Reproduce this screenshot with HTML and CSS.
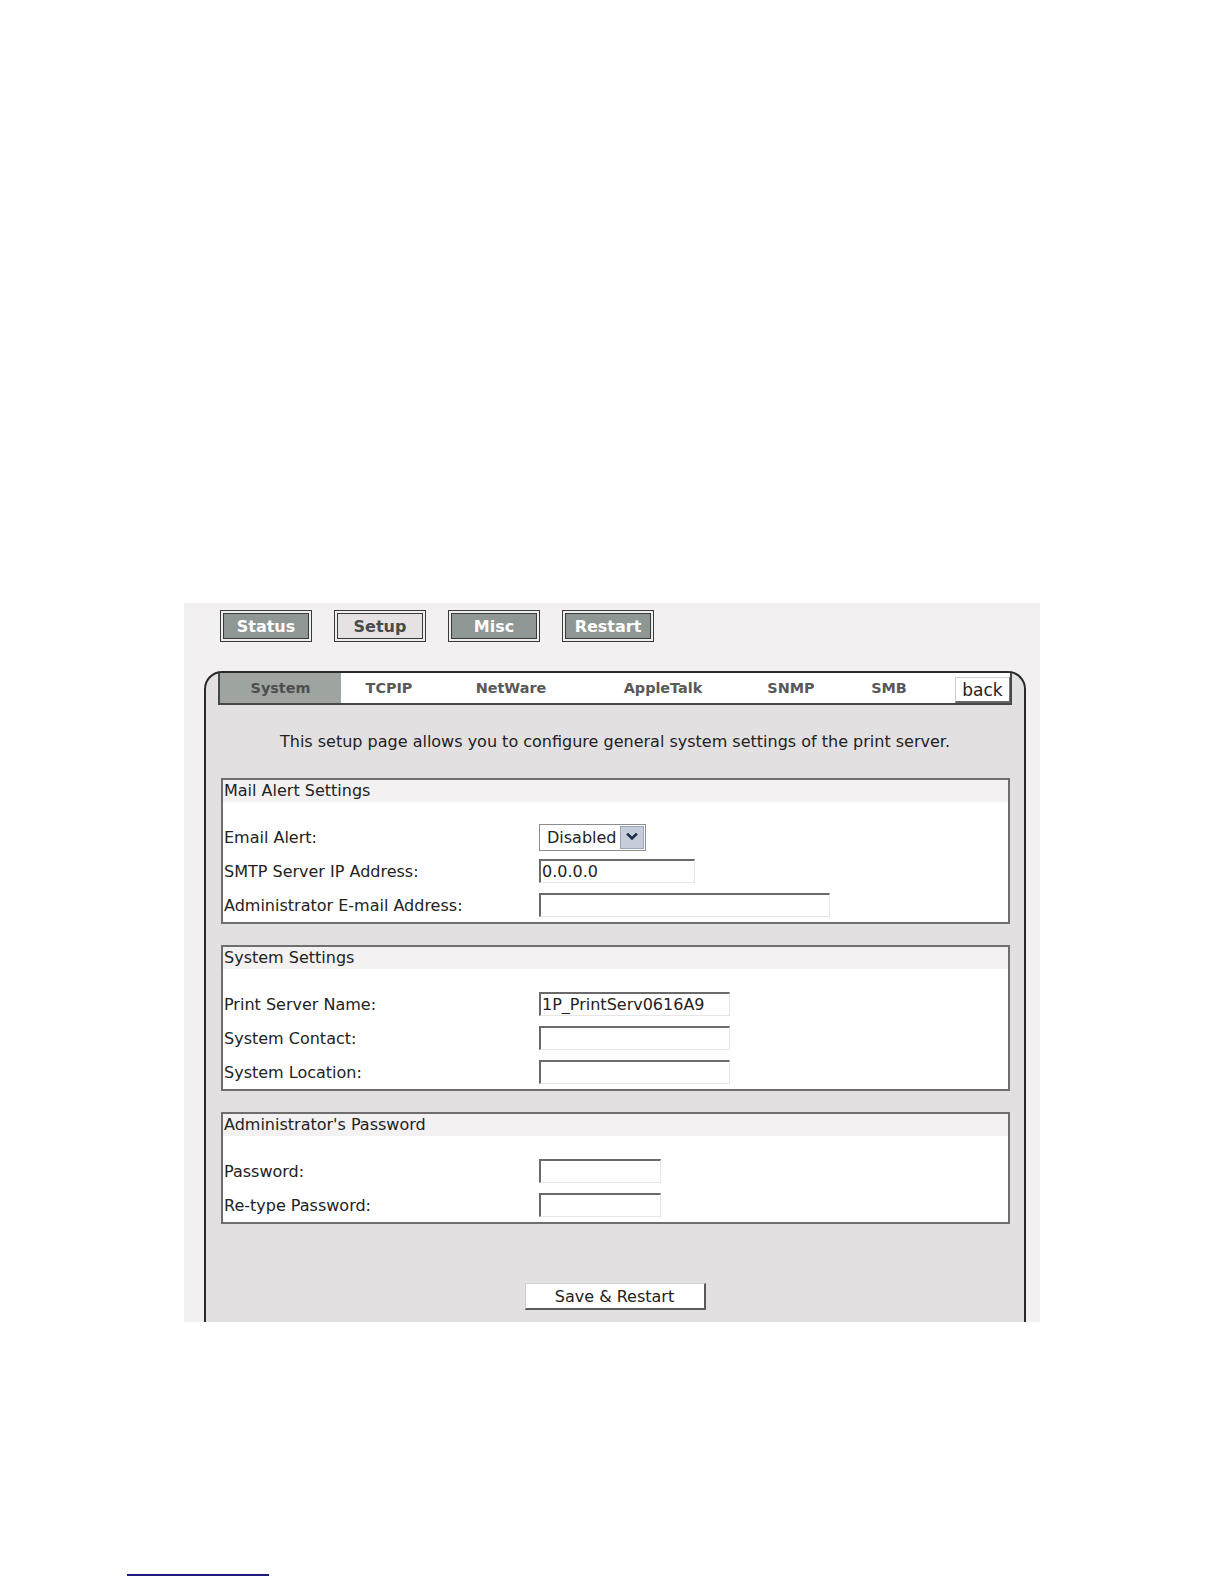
FILE: index.html
```html
<!DOCTYPE html>
<html lang="en">
<head>
<meta charset="utf-8">
<title>Print Server Setup - System</title>
<link rel="stylesheet" href="styles.css">
</head>
<body>
<div class="sheet">
  <div class="canvas">
    <nav class="topnav">
      <a class="topbtn">Status</a>
      <a class="topbtn current">Setup</a>
      <a class="topbtn">Misc</a>
      <a class="topbtn">Restart</a>
    </nav>
    <div class="panel">
      <div class="tabs">
        <span class="tab tab-system active">System</span>
        <span class="tab tab-tcpip">TCPIP</span>
        <span class="tab tab-netware">NetWare</span>
        <span class="tab tab-appletalk">AppleTalk</span>
        <span class="tab tab-snmp">SNMP</span>
        <span class="tab tab-smb">SMB</span>
        <span class="tab-back"><button class="back" type="button">back</button></span>
      </div>
      <p class="intro">This setup page allows you to configure general system settings of the print server.</p>

      <section class="group">
        <h2 class="group-title">Mail Alert Settings</h2>
        <div class="rows">
          <span class="lbl">Email Alert:</span>
          <div class="field">
            <div class="select">
              <span class="select-value">Disabled</span>
              <span class="select-arrow"><svg width="14" height="14" viewBox="0 0 14 14"><path d="M3 4.5 L7 8.5 L11 4.5" fill="none" stroke="#1f2d4a" stroke-width="2.6" stroke-linecap="square"/></svg></span>
            </div>
          </div>
          <span class="lbl">SMTP Server IP Address:</span>
          <div class="field"><input class="input w-ip" type="text" value="0.0.0.0"></div>
          <span class="lbl">Administrator E-mail Address:</span>
          <div class="field"><input class="input w-mail" type="text" value=""></div>
        </div>
      </section>

      <section class="group">
        <h2 class="group-title">System Settings</h2>
        <div class="rows">
          <span class="lbl">Print Server Name:</span>
          <div class="field"><input class="input w-name" type="text" value="1P_PrintServ0616A9"></div>
          <span class="lbl">System Contact:</span>
          <div class="field"><input class="input w-name" type="text" value=""></div>
          <span class="lbl">System Location:</span>
          <div class="field"><input class="input w-name" type="text" value=""></div>
        </div>
      </section>

      <section class="group">
        <h2 class="group-title">Administrator's Password</h2>
        <div class="rows">
          <span class="lbl">Password:</span>
          <div class="field"><input class="input w-pass" type="password" value=""></div>
          <span class="lbl">Re-type Password:</span>
          <div class="field"><input class="input w-pass" type="password" value=""></div>
        </div>
      </section>

      <div class="actions"><button class="save" type="button">Save &amp; Restart</button></div>
    </div>
  </div>
  <div class="rule"></div>
</div>
</body>
</html>
```

FILE: styles.css
```css
* { box-sizing: border-box; }

body {
  margin: 0;
  background: #ffffff;
  font-family: "DejaVu Sans", Verdana, sans-serif;
  color: #1e1e1e;
}

.sheet {
  padding-top: 603px;
}

.canvas {
  margin-left: 184px;
  width: 856px;
  height: 719px;
  overflow: hidden;
  background: #f3f0f2;
  padding-top: 7px;
}

.topnav {
  display: flex;
  gap: 22px;
  padding-left: 36px;
}

.topbtn {
  width: 92px;
  height: 32px;
  display: flex;
  align-items: center;
  justify-content: center;
  border: 1px solid #3a3a3a;
  box-shadow: inset 0 0 0 2px #efefef, inset 0 0 0 3px #3a3a3a;
  background: #8e9794;
  color: #ffffff;
  font-weight: bold;
  font-size: 16px;
  text-decoration: none;
}

.topbtn.current {
  background: #e6e2e4;
  color: #4a4a4a;
}

.panel {
  margin: 29px 14px 0 20px;
  border: 2px solid #2a2a2a;
  border-bottom: 0;
  border-radius: 18px 18px 0 0;
  background: #e3e0e2;
  padding: 0 12px 40px;
}

.tabs {
  display: flex;
  height: 32px;
  background: #ffffff;
  border: 2px solid #474747;
  border-top: 0;
}

.tab {
  display: flex;
  align-items: center;
  justify-content: center;
  font-size: 14.4px;
  font-weight: bold;
  color: #595959;
}

.tab.active {
  background: #9ea49f;
  color: #4e4e4e;
}

.tab-system { width: 121px; }
.tab-tcpip { width: 96px; }
.tab-netware { width: 148px; }
.tab-appletalk { width: 156px; }
.tab-snmp { width: 100px; }
.tab-smb { width: 96px; }

.tab-back {
  flex: 1;
  display: flex;
  justify-content: flex-end;
  align-items: flex-end;
}

.back {
  width: 55px;
  height: 26px;
  padding: 0;
  font-family: "DejaVu Sans", Verdana, sans-serif;
  font-size: 17px;
  color: #222222;
  background: #ffffff;
  border: 1px solid #cfcfcf;
  border-right-color: #777777;
  border-bottom: 2px solid #666666;
}

.intro {
  margin: 0;
  height: 73px;
  display: flex;
  align-items: center;
  justify-content: center;
  font-size: 16px;
  color: #222222;
}

.group {
  margin: 0 2px 0 3px;
  border: 2px solid #6e6e6e;
  background: #ffffff;
}

.group + .group {
  margin-top: 21px;
}

.group-title {
  margin: 0;
  height: 22px;
  line-height: 22px;
  background: #f3f1f2;
  font-size: 16px;
  font-weight: normal;
  padding-left: 1px;
  color: #222222;
}

.rows {
  display: grid;
  grid-template-columns: 316px 1fr;
  grid-auto-rows: 34px;
  align-items: center;
  padding-top: 18px;
}

.lbl {
  font-size: 16px;
  padding-left: 1px;
  color: #222222;
}

.field {
  display: flex;
  align-items: center;
}

.input {
  height: 24px;
  border-style: solid;
  border-width: 2px 1px 1px 2px;
  border-color: #6a6a6a #e6e6e6 #e6e6e6 #6a6a6a;
  font-family: "DejaVu Sans", Verdana, sans-serif;
  font-size: 16px;
  padding: 0 1px;
  background: #ffffff;
  color: #222222;
  outline: none;
}

.w-ip { width: 156px; }
.w-mail { width: 291px; }
.w-name { width: 191px; }
.w-pass { width: 122px; }

.select {
  display: flex;
  align-items: center;
  width: 107px;
  height: 27px;
  border: 1px solid #8c8c8c;
  background: #ffffff;
}

.select-value {
  flex: 1;
  padding-left: 7px;
  font-size: 16px;
  color: #222222;
}

.select-arrow {
  width: 24px;
  height: 23px;
  margin-right: 1px;
  background: #c5cddb;
  border: 1px solid #9aa6b8;
  display: flex;
  align-items: center;
  justify-content: center;
}

.actions {
  display: flex;
  justify-content: center;
  margin-top: 59px;
}

.save {
  width: 181px;
  height: 27px;
  padding: 0;
  background: #ffffff;
  border: 1px solid #cfcfcf;
  border-right: 2px solid #5a5a5a;
  border-bottom: 2px solid #5a5a5a;
  font-family: "DejaVu Sans", Verdana, sans-serif;
  font-size: 16px;
  color: #222222;
}

.rule {
  width: 142px;
  height: 2px;
  background: #1c1c80;
  margin: 252px 0 0 127px;
}
```
